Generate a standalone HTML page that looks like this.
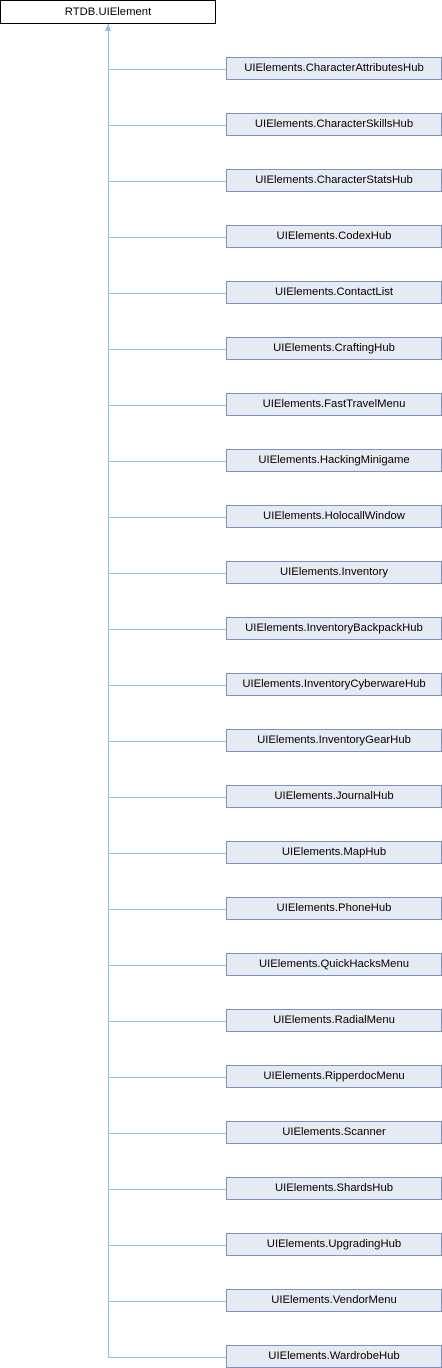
<!DOCTYPE html>
<html><head><meta charset="utf-8"><style>
body{margin:0;width:442px;height:1368px;background:#fff;position:relative;overflow:hidden;font-family:"Liberation Sans",sans-serif;font-size:11.3px;color:#000}
.b{position:absolute;box-sizing:border-box;text-align:center;line-height:21px;white-space:nowrap}
.top{left:0;top:0;width:216px;height:24px;border:1px solid #000;line-height:22px;background:#fff}
.c{left:226px;width:216px;height:23px;border:1px solid #7a93c4;background:#e6eaf3}
.v{position:absolute;left:108px;top:24px;width:1px;height:1333px;background:#84c4ea}
.h{position:absolute;left:108px;width:118px;height:0;border-top:1px solid #84c4ea}
.ar{position:absolute;left:105px;top:24px;width:0;height:0;border-left:3.5px solid transparent;border-right:3.5px solid transparent;border-bottom:7px solid #84c4ea}
</style></head><body>
<div class="b top">RTDB.UIElement</div>
<div class="v"></div><div class="ar"></div>
<script>
var n=["CharacterAttributesHub","CharacterSkillsHub","CharacterStatsHub","CodexHub","ContactList","CraftingHub","FastTravelMenu","HackingMinigame","HolocallWindow","Inventory","InventoryBackpackHub","InventoryCyberwareHub","InventoryGearHub","JournalHub","MapHub","PhoneHub","QuickHacksMenu","RadialMenu","RipperdocMenu","Scanner","ShardsHub","UpgradingHub","VendorMenu","WardrobeHub"];
for(var i=0;i<n.length;i++){var y=57+56*i;document.write('<div class="h" style="top:'+(y+12)+'px"></div><div class="b c" style="top:'+y+'px">UIElements.'+n[i]+'</div>');}
</script>
</body></html>
